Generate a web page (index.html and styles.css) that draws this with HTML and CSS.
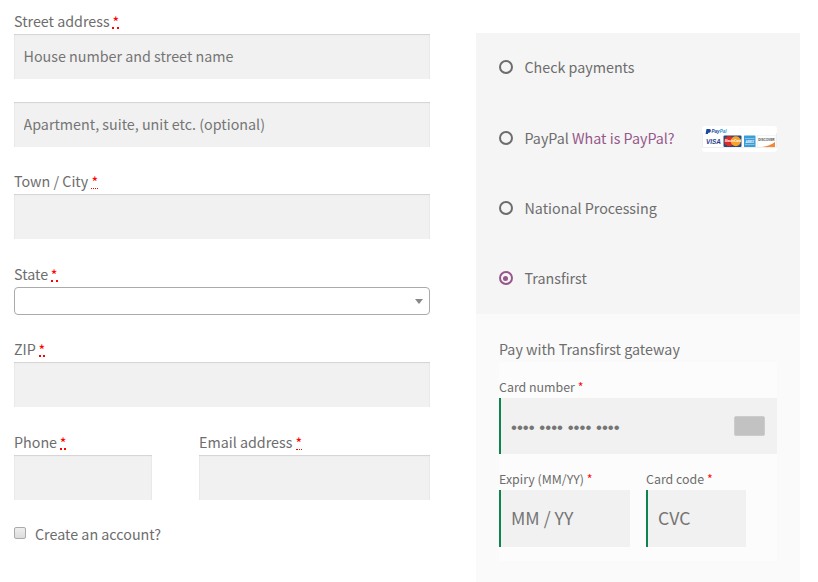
FILE: index.html
```html
<!DOCTYPE html>
<html lang="en">
<head>
<meta charset="utf-8">
<title>Checkout</title>
<link rel="stylesheet" href="styles.css">
</head>
<body>
<main class="checkout">
  <form class="billing">
    <div class="field">
      <label for="street">Street address <abbr class="req" title="required">*</abbr></label>
      <input id="street" class="input" type="text" placeholder="House number and street name">
    </div>
    <div class="field second">
      <input class="input" type="text" placeholder="Apartment, suite, unit etc. (optional)" aria-label="Apartment">
    </div>
    <div class="field town">
      <label for="city">Town / City <abbr class="req tight" title="required">*</abbr></label>
      <input id="city" class="input" type="text">
    </div>
    <div class="field state">
      <label>State <abbr class="req" title="required">*</abbr></label>
      <div class="select"><span class="arrow"></span></div>
    </div>
    <div class="field zip">
      <label for="zip">ZIP <abbr class="req" title="required">*</abbr></label>
      <input id="zip" class="input" type="text">
    </div>
    <div class="pair">
      <div class="field phone">
        <label for="phone">Phone <abbr class="req" title="required">*</abbr></label>
        <input id="phone" class="input" type="text">
      </div>
      <div class="field email">
        <label for="email">Email address <abbr class="req tight" title="required">*</abbr></label>
        <input id="email" class="input" type="text">
      </div>
    </div>
    <div class="account"><span class="checkbox"></span><span>Create an account?</span></div>
  </form>

  <section class="payment">
    <ul class="methods">
      <li><span class="radio"></span><span class="name">Check payments</span></li>
      <li><span class="radio"></span><span class="name">PayPal <a>What is PayPal?</a></span>
        <svg class="cards" width="75" height="26" viewBox="0 0 75 26">
          <rect width="75" height="26" rx="3" fill="#fff"/>
          <path d="M.5 7V21.500H74.500V7" fill="none" stroke="#eee"/>
          <path d="M4.500 3h3q2 .3 1.300 2.200T6.300 6.800L5.900 8H3.600z" fill="#17479e"/>
          <text x="9.500" y="7.200" class="pp" fill="#17479e">Pay<tspan fill="#1f9ad6">Pal</tspan></text>
          <text x="4" y="17.700" class="visa">VISA</text>
          <rect x="21.500" y="9.500" width="18" height="11.500" rx="1" fill="#294a7c"/>
          <circle cx="27.200" cy="15.200" r="5" fill="#df2b24"/>
          <circle cx="33.800" cy="15.200" r="5" fill="#f6a32b"/>
          <text x="23" y="16.300" class="mc">MasterCard</text>
          <rect x="42" y="9.500" width="11.500" height="11.500" rx=".5" fill="#3c9cd6"/>
          <path d="M43 12.500h9.500M43 18.500h9.500" stroke="#80c5e9"/>
          <text x="43.500" y="16.800" class="mc">AMEX</text>
          <rect x="55.500" y="9.500" width="17.500" height="11.500" fill="#fff" stroke="#ececec" stroke-width=".5"/>
          <path d="M60 21q8-1 13-5v5z" fill="#f58634"/>
          <text x="56.300" y="15" class="disc">DISCOVER</text>
        </svg>
      </li>
      <li><span class="radio"></span><span class="name">National Processing</span></li>
      <li><span class="radio on"></span><span class="name">Transfirst</span></li>
    </ul>
    <div class="gateway">
      <p>Pay with Transfirst gateway</p>
      <div class="card-form">
        <label for="card">Card number <b>*</b></label>
        <div class="card-field">
          <input id="card" class="dots" type="text" placeholder="•••• •••• •••• ••••">
          <span class="card-icon"></span>
        </div>
        <div class="card-row">
          <div class="expiry">
            <label for="exp">Expiry (MM/YY) <b>*</b></label>
            <input id="exp" type="text" placeholder="MM / YY">
          </div>
          <div class="code">
            <label for="cvc">Card code <b>*</b></label>
            <input id="cvc" type="text" placeholder="CVC">
          </div>
        </div>
      </div>
    </div>
  </section>
</main>
</body>
</html>
```

FILE: styles.css
```css
* { box-sizing: border-box; }

body {
  margin: 0;
  background: #fff;
  color: #6d6d6d;
  font: 14.3px/26px "Noto Sans CJK SC", "Open Sans", sans-serif;
  overflow: hidden;
}

.checkout {
  display: flex;
  align-items: flex-start;
  height: 582px;
  padding-left: 14px;
}

.billing { width: 416px; padding-top: 8px; }

label { display: block; height: 26px; white-space: nowrap; }

.req {
  display: inline-block;
  height: 21px;
  margin-left: -.5px;
  color: #f00;
  line-height: 28px;
  text-decoration: none;
  vertical-align: top;
  border-bottom: 2px dotted #f00;
}

.req.tight { margin-left: 0; border-bottom-width: 1px; }

input {
  display: block;
  width: 100%;
  margin: 0;
  border: 0;
  border-radius: 0;
  background: #f1f1f1;
  color: #6d6d6d;
  font: inherit;
  outline: 0;
}

input::placeholder { color: #757575; opacity: 1; }

.input {
  height: 45px;
  padding: 0 9px 2px 9.5px;
  box-shadow: inset 0 1px 1px rgba(0, 0, 0, .125), inset 1px 0 0 rgba(0, 0, 0, .02), inset -1px 0 0 rgba(0, 0, 0, .02);
}

.second { margin-top: 23px; }
.town, .zip { margin-top: 21px; }
.state, .pair { margin-top: 22px; }

.select {
  display: flex;
  align-items: center;
  justify-content: flex-end;
  height: 28px;
  padding-right: 6px;
  border: 1px solid #aaa;
  border-radius: 4px;
}

.arrow {
  border: 4px solid transparent;
  border-top: 5px solid #888;
  border-bottom: 0;
}

.pair { display: flex; gap: 47px; }
.phone { width: 138px; }
.email { flex: 1; }

.account { display: flex; align-items: center; gap: 9px; margin-top: 21px; }

.checkbox {
  width: 12px;
  height: 12px;
  margin-top: -3px;
  border: 1px solid #aaa;
  border-radius: 2px;
  background: linear-gradient(#eee, #dcdcdc);
}

.payment {
  width: 324px;
  height: 549px;
  margin: 33px 0 0 46px;
  background: #fafafa;
}

.methods {
  height: 281px;
  margin: 0;
  padding: 0 23px;
  background: #f5f5f5;
  list-style: none;
}

.methods li { display: flex; align-items: center; height: 70.3px; }
.name { margin-top: -2px; }

.radio {
  display: flex;
  align-items: center;
  justify-content: center;
  width: 14px;
  height: 14px;
  margin: -2px 12px 0 -.5px;
  border: 2px solid #6d6d6d;
  border-radius: 50%;
}

.radio.on { border-color: #96588a; }
.radio.on::after { content: ""; width: 5px; height: 5px; border-radius: 50%; background: #96588a; }

.methods li:nth-child(2) .name,
.methods li:nth-child(2) .radio { margin-top: 0; }

a { color: #96588a; }

.cards { margin: 2px 0 0 auto; }
.pp { font: italic 700 4.6px/1 "Liberation Sans", sans-serif; }
.visa { font: italic 700 6.4px/1 "Liberation Sans", sans-serif; fill: #1f3d89; }
.mc { font: italic 700 2.9px/1 "Liberation Sans", sans-serif; fill: #fff; }
.disc { font: 700 3.1px/1 "Liberation Sans", sans-serif; fill: #444; }

.gateway { padding: 22px 23px 0; }
.gateway p { height: 26px; margin: 0; }

.card-form { height: 199px; padding-top: 12px; background: #fcfcfc; }
.card-form label { height: 24px; font-size: 12.4px; line-height: 27px; }
.card-form b { color: #f00; font-weight: 400; }

.card-form input {
  height: 57px;
  padding: 0 10px 3px;
  border-left: 2px solid #0f834d;
  font-size: 17.7px;
}

.card-field {
  display: flex;
  align-items: center;
  height: 56px;
  padding-right: 12px;
  background: #f1f1f1;
}

.card-form .dots {
  flex: 1;
  width: auto;
  min-width: 0;
  height: 56px;
  padding: 3px 10px 0;
  font-family: "Liberation Sans", sans-serif;
  font-size: 16.9px;
}

.card-icon {
  flex: none;
  width: 31px;
  height: 20px;
  border: 1px solid #ccc;
  border-radius: 2px;
  background: #c2c2c2;
}

.card-row { display: flex; gap: 16px; margin-top: 12px; }
.expiry { width: 131px; }
.code { width: 100px; }
```
